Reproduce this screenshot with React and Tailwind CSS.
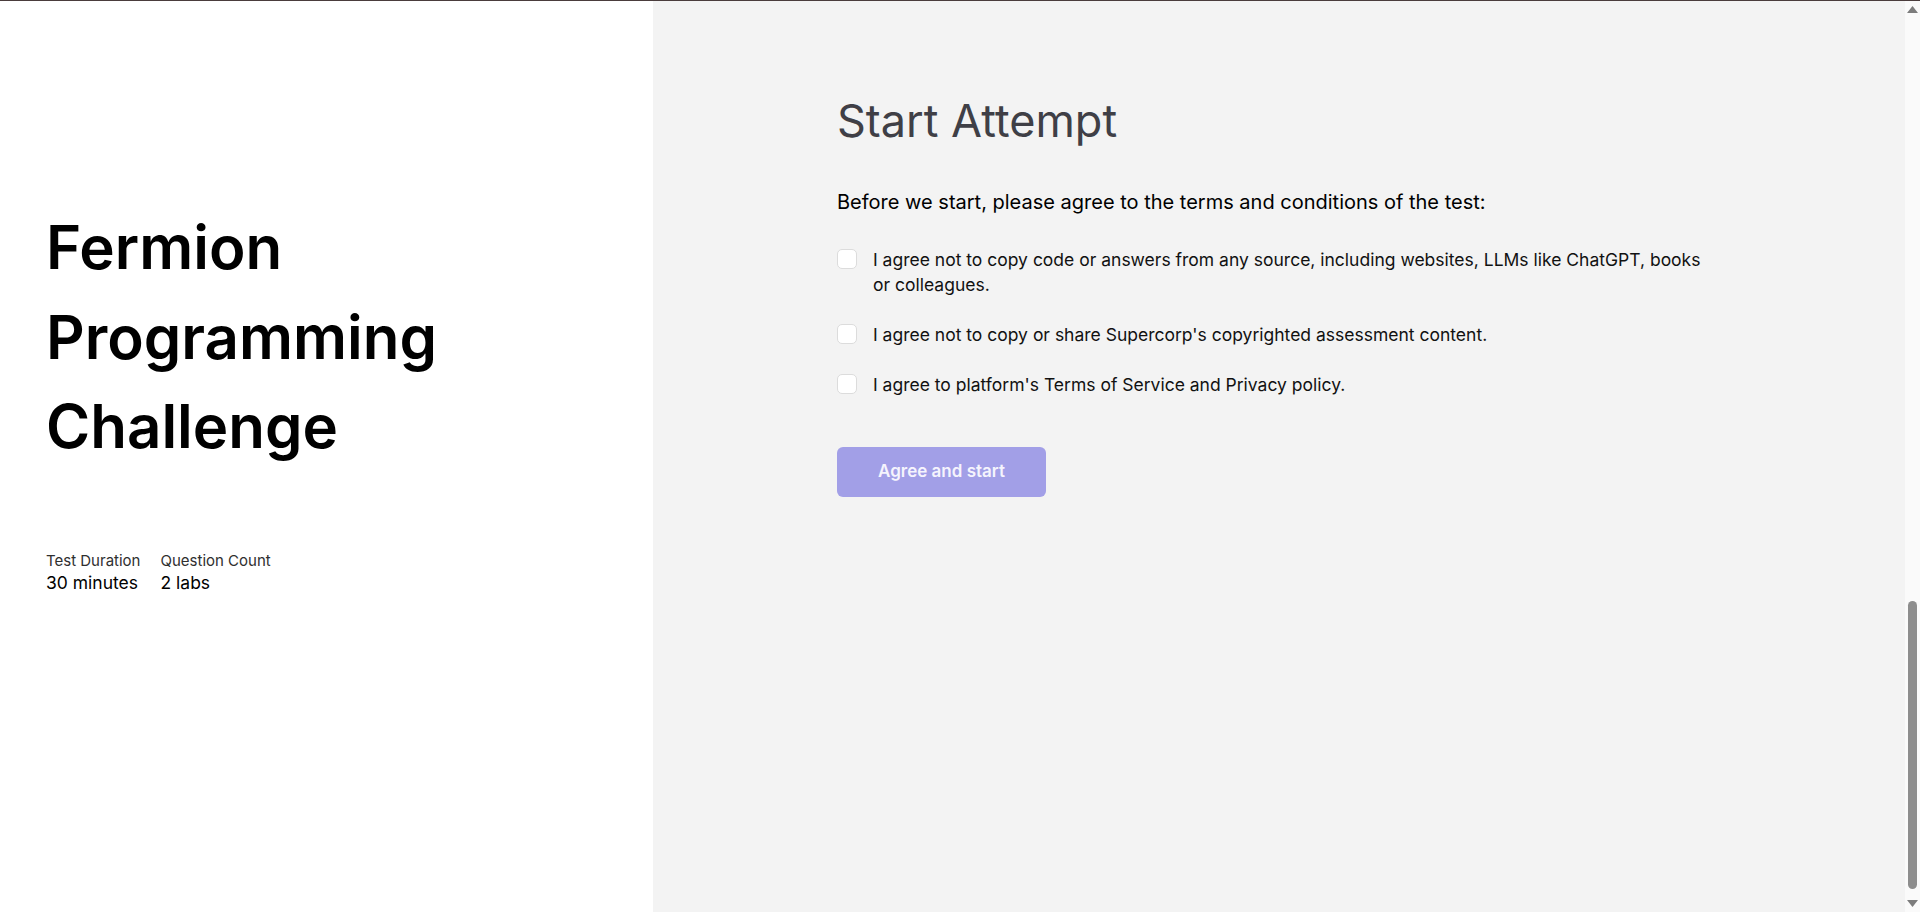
import React from "react";

function Check({ children }) {
  return (
    <label className="flex items-start gap-4">
      <span className="mt-[2px] h-5 w-5 shrink-0 rounded-[5px] border border-[#dcdcdc] bg-white"></span>
      <span className="text-[17.5px] leading-[25px] text-[#111]">{children}</span>
    </label>
  );
}

function Scrollbar() {
  return (
    <div className="flex w-[15px] shrink-0 flex-col bg-[#fafafa]">
      <div className="flex h-[17px] items-center justify-center">
        <svg width="11" height="7" viewBox="0 0 11 7">
          <polygon points="5.5,0 11,7 0,7" fill="#7c7c7c" />
        </svg>
      </div>
      <div className="flex flex-1 flex-col justify-end pb-[6px]">
        <div className="mx-auto h-[288px] w-[9px] rounded-full bg-[#8d8d8d]"></div>
      </div>
      <div className="flex h-[17px] items-center justify-center">
        <svg width="11" height="7" viewBox="0 0 11 7">
          <polygon points="0,0 11,0 5.5,7" fill="#7c7c7c" />
        </svg>
      </div>
    </div>
  );
}

export default function App() {
  return (
    <div
      className="flex h-screen border-t border-[#4a3c3c] bg-white"
      style={{ fontFamily: "Inter, 'Noto Sans', sans-serif" }}
    >
      <div className="w-[653px] shrink-0 bg-white pl-[46px] pt-[202px]">
        <h1 className="text-[60px] font-semibold leading-[89.6px] text-black">
          Fermion
          <br />
          Programming
          <br />
          Challenge
        </h1>
        <div className="mt-[79px] flex gap-5">
          <div>
            <div className="text-[15px] leading-5 text-[#2f2f2f]">Test Duration</div>
            <div className="text-[17.5px] leading-6 text-black">30 minutes</div>
          </div>
          <div>
            <div className="text-[15px] leading-5 text-[#2f2f2f]">Question Count</div>
            <div className="text-[17.5px] leading-6 text-black">2 labs</div>
          </div>
        </div>
      </div>
      <div className="flex-1 bg-[#f3f3f3] pl-[184px] pt-[97px]">
        <div className="w-[866px]">
          <h2 className="text-[45px] font-normal leading-none text-[#3f3f46]">Start Attempt</h2>
          <p className="mt-[47px] text-[20px] leading-6 text-black">
            Before we start, please agree to the terms and conditions of the test:
          </p>
          <div className="mt-[33px] flex flex-col gap-[25px]">
            <Check>
              I agree not to copy code or answers from any source, including websites, LLMs like ChatGPT, books or colleagues.
            </Check>
            <Check>I agree not to copy or share Supercorp's copyrighted assessment content.</Check>
            <Check>I agree to platform's Terms of Service and Privacy policy.</Check>
          </div>
          <button className="mt-[50px] h-[50px] w-[209px] rounded-md bg-[#a29fe7] text-[17px] font-semibold text-[#f5f4fd]">
            Agree and start
          </button>
        </div>
      </div>
      <Scrollbar />
    </div>
  );
}
